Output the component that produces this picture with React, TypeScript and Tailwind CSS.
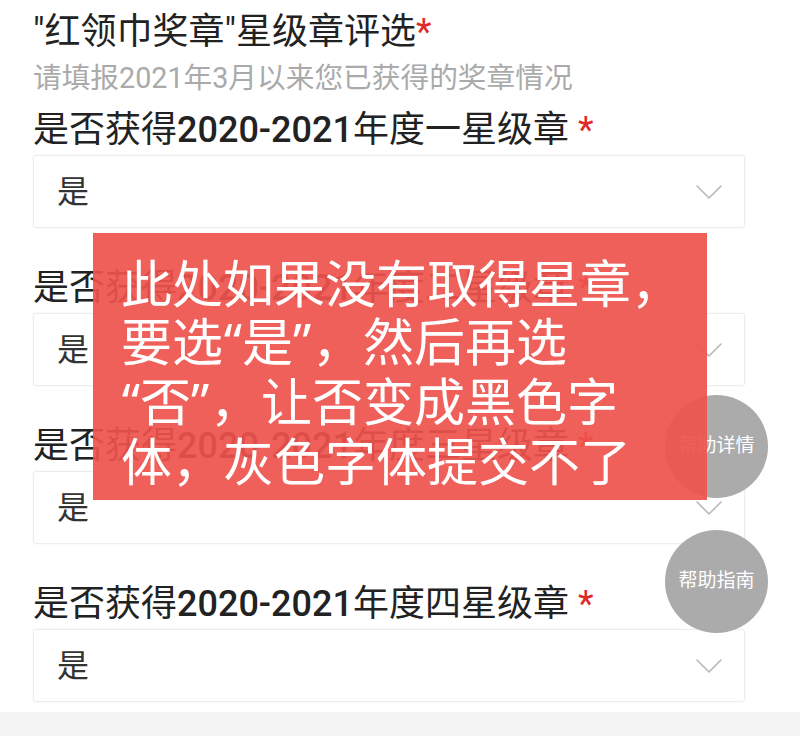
import { ChevronDown } from 'lucide-react';

const levels = ['一', '二', '三', '四'];

function SelectRow({ level }: { level: string }) {
  return (
    <div className="mb-[40px]">
      <div className="text-[36px] leading-[40px] text-[#222] mb-[5px] whitespace-nowrap">
        是否获得<span className="font-medium">2020-2021</span>年度{level}星级章{' '}
        <span className="text-[#e02a2a]">*</span>
      </div>
      <div className="h-[73px] bg-white border border-[#ededed] rounded-[3px] shadow-[0_0_3px_rgba(0,0,0,0.05)] flex items-center justify-between pl-[23px] pr-[11px]">
        <span className="text-[32px] text-[#333]">是</span>
        <ChevronDown size={48} strokeWidth={0.8} className="text-[#b8b8b8]" />
      </div>
    </div>
  );
}

// proportional quote marks hugging the character they enclose
function Open() {
  return <span className='inline-block w-[19px] text-right font-["Noto_Sans"]'>“</span>;
}
function Close() {
  return <span className='inline-block w-[19px] text-left font-["Noto_Sans"]'>”</span>;
}

export default function App() {
  return (
    <div
      className="relative w-[800px] h-[736px] bg-white overflow-hidden"
      style={{ fontFamily: "Roboto, 'Noto Sans CJK SC', sans-serif" }}
    >
      <div className="pl-[33px] pr-[55px] pt-[12px]">
        <div className="text-[36px] leading-[40px] text-[#222] whitespace-nowrap">
          "红领巾奖章"星级章评选<span className="text-[#e02a2a]">*</span>
        </div>
        <div className="mt-[10px] text-[28.7px] leading-[32px] text-[#aaa] whitespace-nowrap">
          请填报2021年3月以来您已获得的奖章情况
        </div>
        <div className="mt-[16px]">
          {levels.map((l) => (
            <SelectRow key={l} level={l} />
          ))}
        </div>
      </div>

      {/* floating help buttons */}
      <div className="absolute left-[665px] top-[395px] w-[103px] h-[103px] rounded-full bg-[#ababab] flex items-center justify-center text-white text-[19px]">
        帮助详情
      </div>
      <div className="absolute left-[665px] top-[530px] w-[103px] h-[103px] rounded-full bg-[#ababab] flex items-center justify-center text-white text-[19px]">
        帮助指南
      </div>

      {/* red annotation overlay */}
      <div
        className="absolute left-[93px] top-[233px] w-[614px] h-[267px] bg-[rgba(238,82,76,0.92)] pl-[28px] pt-[19px] text-white text-[51px] leading-[58px] whitespace-nowrap"
        style={{ fontFamily: "'Noto Sans CJK SC', sans-serif" }}
      >
        此处如果没有取得星章，
        <br />
        要选<Open />是<Close />，然后再选
        <br />
        <Open />否<Close />，让否变成黑色字
        <br />
        体，灰色字体提交不了
      </div>

      <div className="absolute left-0 right-0 bottom-0 h-[24px] bg-[#f3f3f3]" />
    </div>
  );
}
